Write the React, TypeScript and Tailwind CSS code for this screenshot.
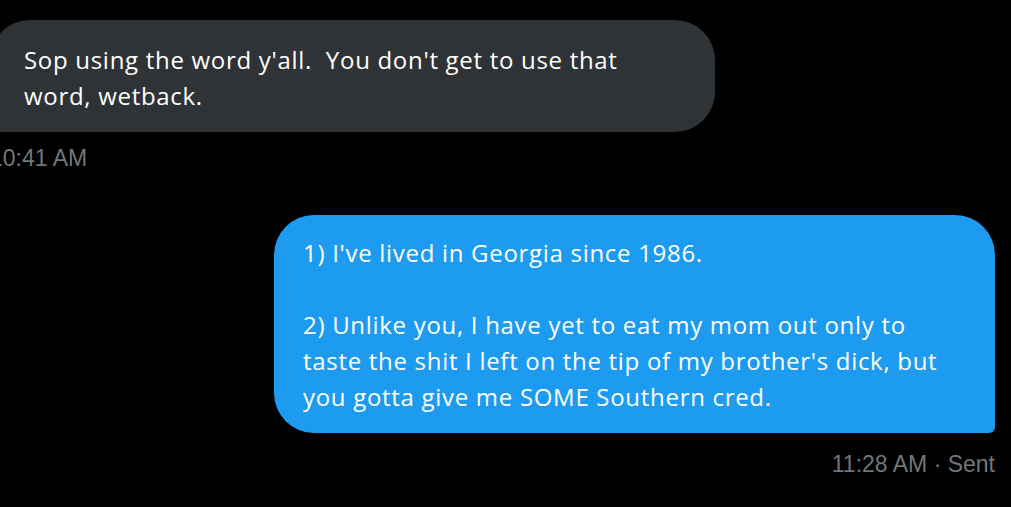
const msgFont = { fontFamily: '"Open Sans", "Noto Sans", sans-serif' };

const App = () => {
    return (
        <div className="w-[1011px] h-[507px] bg-black overflow-hidden flex flex-col pt-5 pr-4">
            <div className="-ml-[10px] flex flex-col items-start">
                <div className="bg-[#2f3336] rounded-[40px] rounded-bl-none text-white text-[24px] tracking-[0.7px] leading-[36px] pl-[34px] pr-[30px] pt-[22px] pb-[18px] w-[725px] whitespace-pre" style={msgFont}>
                    {"Sop using the word y'all.  You don't get to use that\nword, wetback."}
                </div>
                <span className="mt-[10px] text-[23px] leading-[32px] text-[#71767b] font-['Liberation_Sans',Arial,sans-serif]">10:41 AM</span>
            </div>

            <div className="flex flex-col items-end mt-[41px]">
                <div className="bg-[#1d9bf0] rounded-[40px] rounded-br-[6px] text-white text-[24px] tracking-[0.7px] leading-[36px] pl-[29px] pr-[30px] pt-[20px] pb-[18px] w-[721px] whitespace-pre" style={msgFont}>
                    {"1) I've lived in Georgia since 1986.\n\n2) Unlike you, I have yet to eat my mom out only to\ntaste the shit I left on the tip of my brother's dick, but\nyou gotta give me SOME Southern cred."}
                </div>
                <span className="mt-[15px] text-[23px] leading-[32px] text-[#71767b] font-['Liberation_Sans',Arial,sans-serif]">11:28 AM · Sent</span>
            </div>
        </div>
    );
};

export default App;
